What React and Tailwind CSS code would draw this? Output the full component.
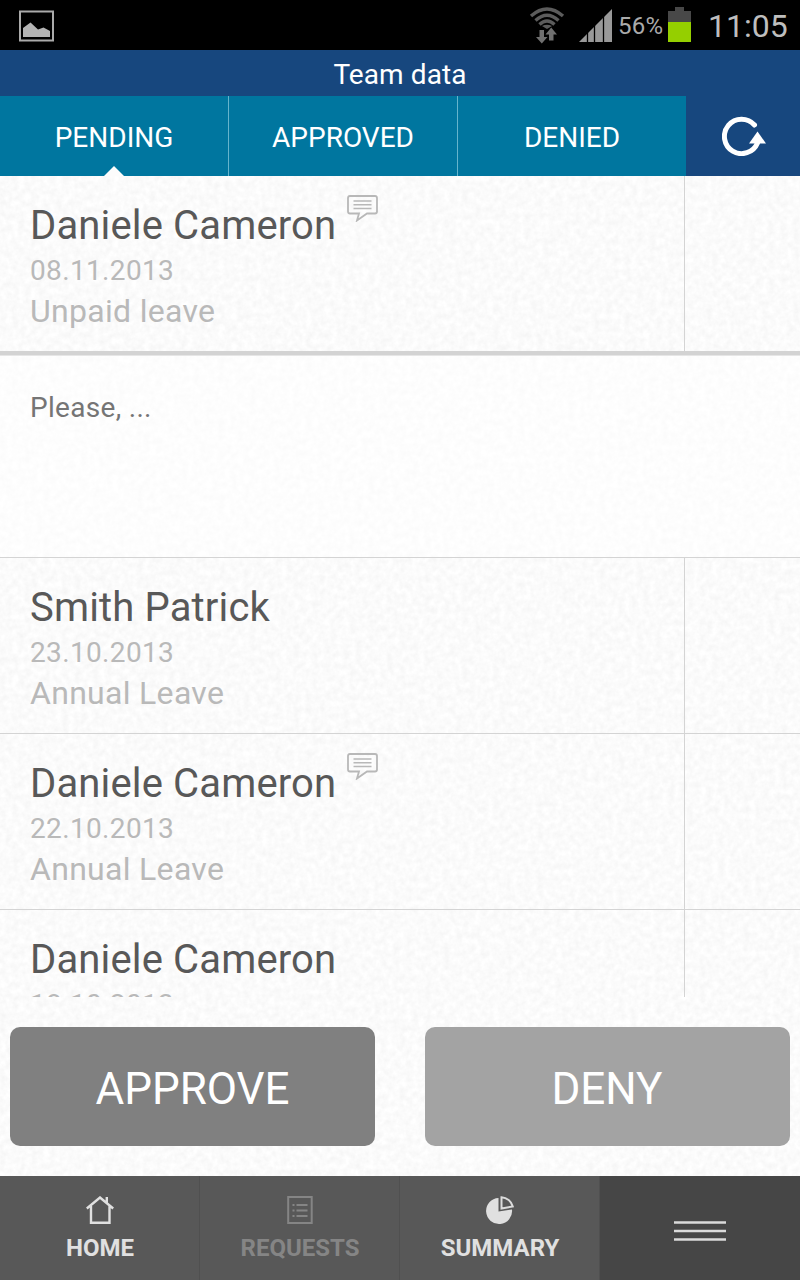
import React from 'react';

const TABS = [
    { label: 'PENDING', active: true },
    { label: 'APPROVED', active: false },
    { label: 'DENIED', active: false }
];

const REQUESTS = [
    { id: 1, name: 'Daniele Cameron', date: '08.11.2013', type: 'Unpaid leave', hasNote: true, note: 'Please, ...' },
    { id: 2, name: 'Smith Patrick', date: '23.10.2013', type: 'Annual Leave' },
    { id: 3, name: 'Daniele Cameron', date: '22.10.2013', type: 'Annual Leave', hasNote: true },
    { id: 4, name: 'Daniele Cameron', date: '18.10.2013' }
];

// Subtle paper grain behind the list and the action buttons
function PaperTexture() {
    return (
        <svg className="absolute inset-0 -z-10 w-full h-full" aria-hidden="true">
            <filter id="paper" x="0" y="0" width="100%" height="100%" colorInterpolationFilters="sRGB">
                <feTurbulence type="fractalNoise" baseFrequency="0.16" numOctaves="3" seed="4" />
                <feColorMatrix values="0.06 0 0 0 0.954  0.06 0 0 0 0.954  0.06 0 0 0 0.954  0 0 0 0 1" />
            </filter>
            <rect width="100%" height="100%" filter="url(#paper)" />
        </svg>
    );
}

function WifiIcon() {
    return (
        <svg width="36" height="38" viewBox="0 0 36 38" fill="none" stroke="#5c5c5c">
            <g strokeWidth="3.400">
                <path d="M2 10Q18 -4 34 10" />
                <path d="M6.500 14.500Q18 4 29.500 14.500" />
                <path d="M10.500 18.500Q18 11.500 25.500 18.500" />
            </g>
            <path d="M13 20Q18 17.500 23 20L18 23Z" fill="#5c5c5c" stroke="none" />
            <path d="M10.500 24h4.500v7h3.500L12.800 37.500L7 31H10.500zM20 34.500h4.500v-6h3.500L22.200 21.500L16.500 28.500H20z" fill="#707070" stroke="none" />
        </svg>
    );
}

function StatusBar() {
    return (
        <header className="flex h-[50px] items-center justify-between bg-black">
            <svg className="ml-[18px] mt-px" width="37" height="32" viewBox="0 0 37 32">
                <rect x="2" y="1.500" width="33" height="29" fill="none" stroke="#aaa" strokeWidth="2" />
                <path d="M5 18L12.500 12.500L20 19.500L25.500 17.500L32 21V27H5z" fill="#b4b4b4" />
            </svg>
            <div className="flex items-center pr-[12px]">
                <WifiIcon />
                <svg className="ml-[14px] mt-px" width="34" height="33" viewBox="0 0 34 33" fill="#999">
                    <path d="M0 33L33 0V33z" />
                    <path d="M8.500 20V33M15.500 10V33M24.500 3V33" stroke="#000" strokeWidth="1.300" />
                </svg>
                <span className="ml-[5px] mt-[2px] w-[45px] text-[24px] leading-8 tracking-[0.2px] text-[#aaa]">56%</span>
                <svg className="mb-px ml-[5px]" width="23" height="35" viewBox="0 0 23 35">
                    <path d="M0 4H7V0H16V4H23V15H0z" fill="#484848" />
                    <path d="M0 15H23V35H0z" fill="#95cf00" />
                </svg>
                <span className="ml-[17px] mt-[2px] w-[80px] text-[32px] leading-10 text-[#bebebe]">11:05</span>
            </div>
        </header>
    );
}

function TabBar() {
    return (
        <nav className="flex h-[80px] bg-[#17477e] text-white">
            {TABS.map((tab, i) => (
                <button
                    key={tab.label}
                    className={`relative h-full bg-[#00769f] pt-[3px] text-[28px] ${i < 2 ? 'w-[229px] border-r border-[#66b4cc]' : 'w-[228px]'}`}
                >
                    {tab.label}
                    {tab.active && (
                        <svg className="absolute bottom-0 left-[104px]" width="20" height="10" viewBox="0 0 20 10">
                            <path d="M0 10L10 0L20 10z" fill="#fcfcfc" />
                        </svg>
                    )}
                </button>
            ))}
            <button className="flex flex-1 items-center justify-center" aria-label="Refresh">
                <svg className="ml-px" width="44" height="40" viewBox="0 0 44 40" fill="none">
                    <path d="M32.500 9A17.200 17.200 0 1 0 35.500 27" stroke="#fff" strokeWidth="5" strokeLinecap="round" />
                    <path d="M27 27.500L35.500 15.500L44 27.500z" fill="#fff" />
                </svg>
            </button>
        </nav>
    );
}

function NoteIcon() {
    return (
        <svg className="ml-[11px] -mt-[7px]" width="31" height="27" viewBox="0 0 31 27" fill="none" stroke="#b8b8b8" strokeWidth="1.800">
            <path d="M3 1H28Q30 1 30 3V16.500Q30 18.500 28 18.500H20L10 25.500L12 18.500H3Q1 18.500 1 16.500V3Q1 1 3 1Z" />
            <path d="M6.500 6H24.500M6.500 9.700H24.500M6.500 13.400H24.500" strokeWidth="1.500" />
        </svg>
    );
}

function RequestRow({ request }) {
    return (
        <>
            <div className="flex h-[175px]">
                <div className="w-[685px] border-r border-[#d4d4d4] pl-[30px] pt-[26px]">
                    <div className="flex h-12">
                        <span className="text-[40px] leading-[48px] tracking-[0.15px] text-[#585858]">{request.name}</span>
                        {request.hasNote && <NoteIcon />}
                    </div>
                    <p className="mt-[5px] text-[28px] leading-8 tracking-[0.35px] text-[#b9b9b9]">{request.date}</p>
                    {request.type && (
                        <p className="mt-[4px] text-[32px] leading-10 tracking-[0.3px] text-[#b9b9b9]">{request.type}</p>
                    )}
                </div>
            </div>
            {request.note ? (
                <div className="h-[207px] border-b border-[#d4d4d4]">
                    <div className="h-[5px] border-b border-[#e6e6e6] bg-[#d3d3d3]" />
                    <div className="h-[201px] bg-white/55 pl-[30px] pt-[36px]">
                        <p className="text-[28px] leading-8 tracking-[0.3px] text-[#757575]">{request.note}</p>
                    </div>
                </div>
            ) : (
                <div className="h-px bg-[#d4d4d4]" />
            )}
        </>
    );
}

function HomeIcon() {
    return (
        <svg width="28" height="28" viewBox="0 0 28 28" fill="none" stroke="#e0e0e0" strokeWidth="2.400">
            <path d="M0.800 12.500L14 1.500L27.200 12.500M5 10V26.800H23.500V10M20.800 6.500V1" />
        </svg>
    );
}

function ListIcon() {
    return (
        <svg width="26" height="28" viewBox="0 0 26 28" fill="none" stroke="#858585" strokeWidth="2">
            <rect x="1.200" y="1" width="23.500" height="26" />
            <path d="M5.500 9H7.500M5.500 14.500H7.500M5.500 20H7.500M9.500 9H20.500M9.500 14.500H20.500M9.500 20H20.500" />
        </svg>
    );
}

function PieIcon() {
    return (
        <svg width="28" height="28" viewBox="0 0 28 28">
            <path d="M12.500 2A13 13 0 1 0 26 13.500L12.500 15.500z" fill="#e0e0e0" />
            <path d="M15.500 1.200A12.500 12.500 0 0 1 26.800 10.500L15.500 12.500z" fill="none" stroke="#dcdcdc" strokeWidth="2" />
        </svg>
    );
}

function BottomNav() {
    return (
        <nav className="grid h-[104px] grid-cols-4 bg-[#585858] text-[24px] font-bold leading-7 text-[#e0e0e0]">
            <button className="flex flex-col items-center border-r border-[#505050] pt-5">
                <HomeIcon />
                <span className="mt-[10px] pl-px">HOME</span>
            </button>
            <button className="flex flex-col items-center border-r border-[#505050] pt-5 text-[#858585]">
                <ListIcon />
                <span className="mt-[10px] pl-px">REQUESTS</span>
            </button>
            <button className="flex flex-col items-center border-r border-[#505050] pt-5">
                <PieIcon />
                <span className="mt-[10px] pl-px">SUMMARY</span>
            </button>
            <button className="flex flex-col items-center bg-[#464646] pt-[45px]" aria-label="Menu">
                <svg width="52" height="20" viewBox="0 0 52 20" stroke="#dadada" strokeWidth="2.300">
                    <path d="M0 1.500H52M0 10H52M0 18.500H52" />
                </svg>
            </button>
        </nav>
    );
}

export default function App() {
    return (
        <div className="flex h-[1280px] w-[800px] flex-col overflow-hidden font-['Roboto',sans-serif]">
            <StatusBar />
            <h1 className="h-[46px] bg-[#17477e] text-center text-[28px] leading-[49px] tracking-[0.1px] text-white">Team data</h1>
            <TabBar />
            <main className="relative isolate flex h-[1000px] flex-col bg-[#fbfbfb]">
                <PaperTexture />
                <div className="h-[821px] overflow-hidden">
                    {REQUESTS.map(request => (
                        <RequestRow key={request.id} request={request} />
                    ))}
                </div>
                <div className="flex justify-between px-[10px] pt-[30px] text-[44px] text-white">
                    <button className="h-[119px] w-[365px] rounded-[10px] bg-[#808080] pt-1">APPROVE</button>
                    <button className="h-[119px] w-[365px] rounded-[10px] bg-[#a3a3a3] pr-px pt-1">DENY</button>
                </div>
            </main>
            <BottomNav />
        </div>
    );
}
